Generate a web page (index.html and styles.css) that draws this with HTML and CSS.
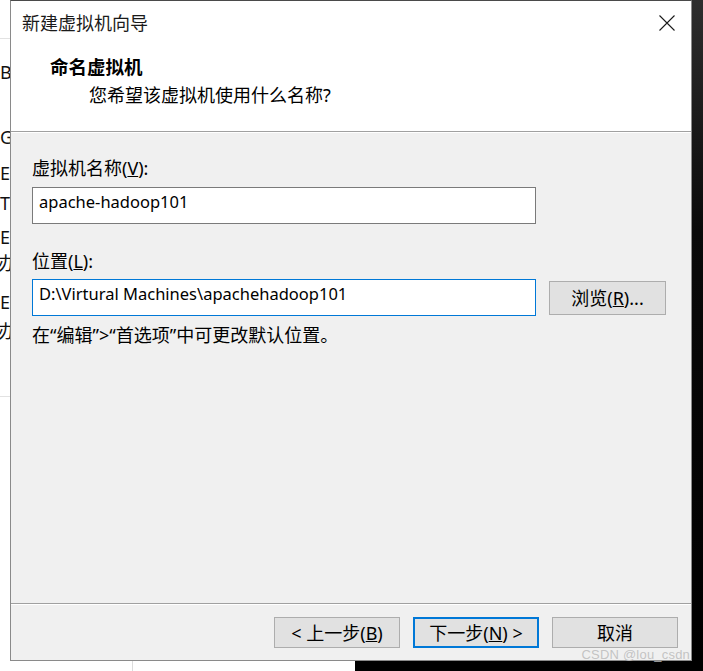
FILE: index.html
```html
<!DOCTYPE html>
<html lang="zh-CN">
<head>
<meta charset="utf-8">
<title>新建虚拟机向导</title>
<link rel="stylesheet" href="styles.css">
</head>
<body>
<div class="screen">
  <div class="main">
    <div class="strip">
      <div class="strip-line"></div>
      <div class="glyph g1">B</div>
      <div class="glyph g2">G</div>
      <div class="glyph g3">E</div>
      <div class="glyph g4">T</div>
      <div class="glyph g5">E</div>
      <div class="glyph g6">办</div>
      <div class="glyph g7">E</div>
      <div class="glyph g8">办</div>
      <div class="strip-line strip-line-low"></div>
    </div>
    <div class="dialog">
      <div class="titlebar">
        <span class="title">新建虚拟机向导</span>
        <span class="close">
          <svg width="16" height="16" viewBox="0 0 16 16"><path d="M0.5 0.5 L15.5 15.5 M15.5 0.5 L0.5 15.5" stroke="#1a1a1a" stroke-width="1.1" fill="none"/></svg>
        </span>
      </div>
      <div class="header">
        <div class="heading">命名虚拟机</div>
        <div class="sub">您希望该虚拟机使用什么名称?</div>
      </div>
      <div class="body">
        <div class="label">虚拟机名称(<u>V</u>):</div>
        <div class="field">apache-hadoop101</div>
        <div class="label label-loc">位置(<u>L</u>):</div>
        <div class="row">
          <div class="field focused">D:\Virtural Machines\apachehadoop101</div>
          <button class="btn browse">浏览(<u>R</u>)...</button>
        </div>
        <div class="hint">在“编辑”&gt;“首选项”中可更改默认位置。</div>
      </div>
      <div class="footer">
        <button class="btn">&lt; 上一步(<u>B</u>)</button>
        <button class="btn default">下一步(<u>N</u>) &gt;</button>
        <button class="btn">取消</button>
      </div>
    </div>
    <div class="dark-right"></div>
  </div>
  <div class="bottom">
    <div class="bottom-white"><div class="vline"></div></div>
    <div class="bottom-dark"></div>
  </div>
  <div class="watermark">CSDN @lou_csdn</div>
</div>
</body>
</html>
```
FILE: styles.css
```css
html, body {
  margin: 0;
  padding: 0;
  background: #fff;
}

.screen {
  position: relative;
  width: 703px;
  height: 671px;
  overflow: hidden;
  display: flex;
  flex-direction: column;
  background: #fff;
  font-family: "Noto Sans", "Noto Sans CJK SC", sans-serif;
  color: #000;
}

.main {
  display: flex;
  height: 661px;
  flex: none;
}

/* left background strip of the window behind */
.strip {
  width: 10px;
  flex: none;
  overflow: hidden;
  background: #fff;
}
.strip-line {
  margin-top: 38px;
  height: 1px;
  width: 10px;
  background: #e2e2e2;
}
.strip-line-low { margin-top: 55px; }
.glyph {
  height: 20px;
  line-height: 20px;
  font-size: 18px;
  white-space: nowrap;
  color: #111;
}
.g1 { margin-top: 23px; }
.g2 { margin-top: 45px; }
.g3 { margin-top: 16px; }
.g4 { margin-top: 10px; }
.g5 { margin-top: 14px; }
.g6 { margin-top: 6px; margin-left: -2px; }
.g7 { margin-top: 19px; }
.g8 { margin-top: 9px; margin-left: -2px; }

/* dialog */
.dialog {
  width: 682px;
  height: 661px;
  flex: none;
  box-sizing: border-box;
  border: 1px solid #8a8a8a;
  border-top-color: #4a4a4a;
  background: #f0f0f0;
  display: flex;
  flex-direction: column;
}

.titlebar {
  height: 43px;
  flex: none;
  display: flex;
  align-items: center;
  justify-content: space-between;
  padding: 0 16px 0 11px;
  background: #fff;
}
.title {
  font-size: 18px;
  line-height: 24px;
  color: #1a1a1a;
}
.close {
  display: flex;
  width: 16px;
  height: 16px;
}

.header {
  flex: none;
  background: #fff;
  padding: 11px 0 24px;
  border-bottom: 1px solid #a0a0a0;
}
.heading {
  padding-left: 39px;
  font-size: 18.5px;
  line-height: 24px;
  font-weight: bold;
}
.sub {
  margin-top: 4px;
  padding-left: 78px;
  font-size: 18px;
  line-height: 24px;
}

.body {
  flex: 1;
  padding: 23px 0 0 21px;
  border-top: 1px solid #fff;
}
.label {
  font-size: 18px;
  line-height: 24px;
}
.label-loc { margin-top: 25px; }

.field {
  margin-top: 7px;
  width: 504px;
  height: 37px;
  box-sizing: border-box;
  border: 1px solid #7a7a7a;
  background: #fff;
  padding-left: 6px;
  font-size: 16.5px;
  line-height: 28px;
  white-space: nowrap;
  color: #000;
}
.field.focused {
  border-color: #0078d7;
}
.row {
  display: flex;
  align-items: center;
  gap: 13px;
  margin-top: 6px;
}
.row .field { margin-top: 0; }

.btn {
  width: 126px;
  height: 31px;
  box-sizing: border-box;
  border: 1px solid #adadad;
  background: #e1e1e1;
  font-family: "Noto Sans", "Noto Sans CJK SC", sans-serif;
  font-size: 18px;
  line-height: 24px;
  color: #000;
  padding: 0;
  margin: 0;
}
.btn.default {
  border: 2px solid #0078d7;
}
.browse {
  width: 117px;
  height: 34px;
}

.hint {
  margin-top: 7px;
  font-size: 18px;
  line-height: 24px;
}

.footer {
  flex: none;
  display: flex;
  justify-content: flex-end;
  gap: 13px;
  padding: 13px 13px 12px 0;
  border-top: 1px solid #a0a0a0;
  box-shadow: inset 0 1px 0 #fff;
}

.dark-right {
  flex: 1;
  background: linear-gradient(#2e2e2e, #0a0a0a 35%, #000);
}

.bottom {
  flex: 1;
  display: flex;
}
.bottom-white {
  width: 355px;
  background: #fff;
  position: relative;
}
.vline {
  margin-left: 132px;
  width: 1px;
  height: 100%;
  background: #dcdcdc;
}
.bottom-dark {
  flex: 1;
  background: #000;
}

.watermark {
  position: absolute;
  right: 13px;
  bottom: 9px;
  font-family: "Liberation Sans", Arial, sans-serif;
  font-size: 13px;
  line-height: 15px;
  color: rgba(190, 190, 190, 0.9);
  letter-spacing: 0.2px;
}
```
